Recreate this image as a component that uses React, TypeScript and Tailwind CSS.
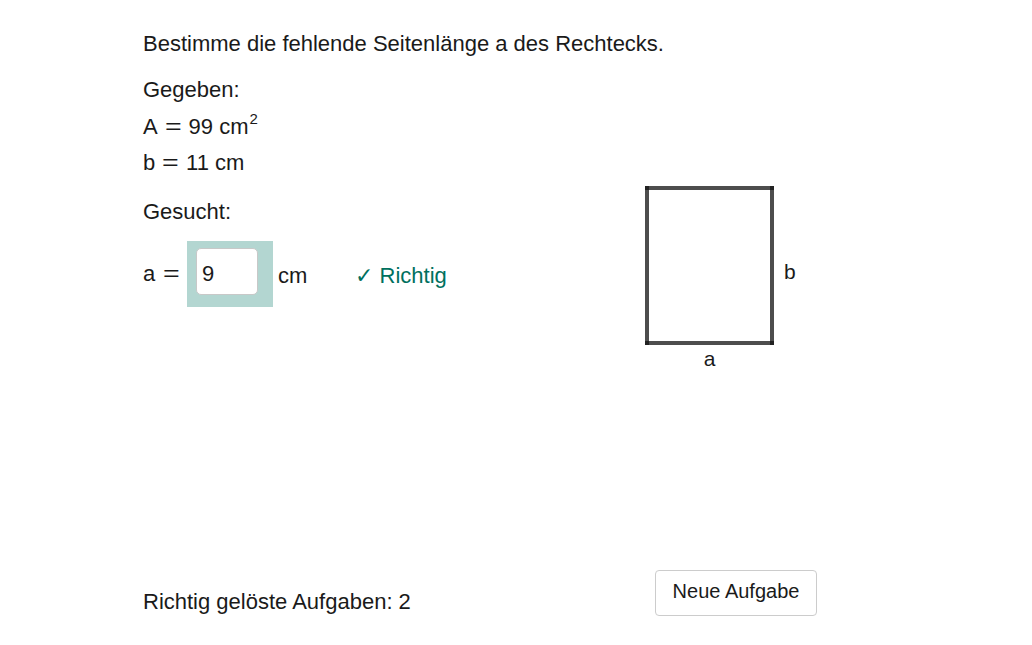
export default function App() {
  return (
    <div
      className="w-[1032px] h-[645px] bg-white text-[#1a1a1a] flex flex-col overflow-hidden"
      style={{ fontFamily: '"Liberation Sans", Arial, sans-serif' }}
    >
      {/* Task text */}
      <div className="pl-[143px] pt-[32px] text-[22px] leading-[24px]">
        <p>Bestimme die fehlende Seitenlänge a des Rechtecks.</p>
      </div>

      <div className="flex pl-[143px] mt-[22px]">
        {/* Left: given / wanted */}
        <div className="w-[502px] text-[22px] leading-[24px]">
          <p>Gegeben:</p>
          <p className="mt-[13px]">
            A<span className="inline-block mx-[9px] scale-x-[1.3]">=</span>99 cm
            <span className="inline-block align-top text-[15px] leading-[15px] -translate-y-[4px] ml-[1px]">2</span>
          </p>
          <p className="mt-[12px]">
            b<span className="inline-block mx-[9px] scale-x-[1.3]">=</span>11 cm
          </p>
          <p className="mt-[25px]">Gesucht:</p>

          <div className="mt-[17px] flex items-center h-[66px]">
            <span>a</span>
            <span className="inline-block ml-[10px] mr-[9px] scale-x-[1.3]">=</span>
            <div className="w-[86px] h-[66px] bg-[#b3d6d1] pl-[9px] pt-[7px]">
              <input
                type="text"
                defaultValue="9"
                className="w-[62px] h-[47px] bg-white rounded-[5px] border border-[#c8c8c8] px-[5px] pt-[4px] text-[22px] text-[#1a1a1a] outline-none"
                style={{ fontFamily: '"Liberation Sans", Arial, sans-serif' }}
              />
            </div>
            <span className="ml-[5px] mt-[4px]">cm</span>
            <span className="ml-[48px] mt-[4px] text-[#00705e]">✓ Richtig</span>
          </div>
        </div>

        {/* Right: rectangle drawing */}
        <div className="mt-[108px] flex flex-col items-start">
          <div className="flex items-center">
            <div className="relative w-[129px] h-[159px] border-[4px] border-[#4d4d4d]">
              <span className="absolute -left-[4px] -top-[4px] w-[4px] h-[4px] bg-[#222]" />
              <span className="absolute -right-[4px] -top-[4px] w-[4px] h-[4px] bg-[#222]" />
              <span className="absolute -left-[4px] -bottom-[4px] w-[4px] h-[4px] bg-[#222]" />
              <span className="absolute -right-[4px] -bottom-[4px] w-[4px] h-[4px] bg-[#222]" />
            </div>
            <span className="ml-[10px] mt-[12px] text-[21px] leading-[24px]">b</span>
          </div>
          <div className="w-[129px] text-center text-[21px] leading-[24px] mt-[2px]">a</div>
        </div>
      </div>

      {/* Bottom row */}
      <div className="mt-auto mb-[29px] pl-[143px] flex items-start">
        <p className="w-[512px] mt-[20px] text-[22px] leading-[24px]">
          Richtig gelöste Aufgaben: 2
        </p>
        <button
          type="button"
          className="w-[162px] h-[46px] rounded-[4px] border border-[#cccccc] bg-white text-[20px] text-[#1a1a1a] pb-[4px]"
          style={{ fontFamily: '"Liberation Sans", Arial, sans-serif' }}
        >
          Neue Aufgabe
        </button>
      </div>
    </div>
  );
}
